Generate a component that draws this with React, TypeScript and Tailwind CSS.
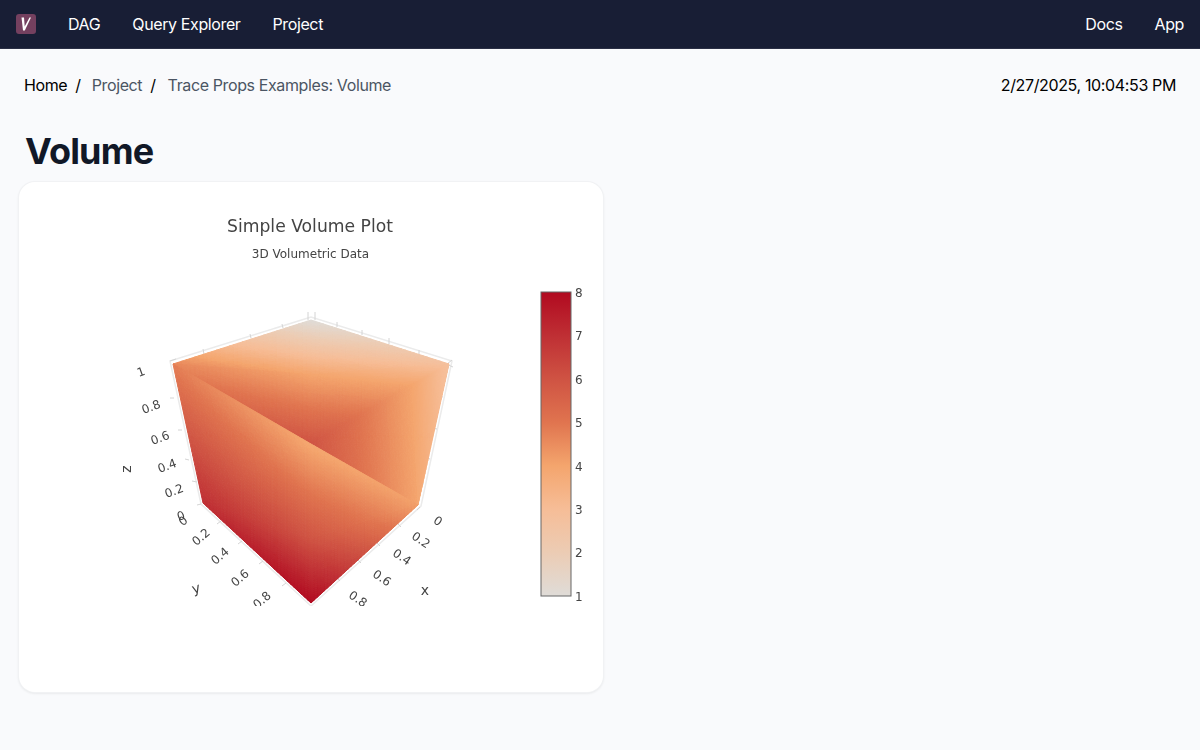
import React from "react";

type Pt = [number, number];
type Vert = { p: Pt; v: number };

// value -> colour, read off the colour bar
const SCALE: [number, number, number, number][] = [
  [1, 223, 220, 216],
  [2, 236, 204, 180],
  [3, 246, 189, 151],
  [4, 244, 165, 109],
  [5, 224, 116, 79],
  [6, 207, 83, 67],
  [7, 191, 47, 52],
  [8, 177, 10, 32],
];

function colorAt(v: number) {
  const c = Math.min(8, Math.max(1, v));
  const i = Math.min(6, Math.floor(c - 1));
  const t = c - 1 - i;
  const a = SCALE[i];
  const b = SCALE[i + 1];
  const mix = (k: number) => Math.round(a[k] + (b[k] - a[k]) * t);
  return `rgb(${mix(1)},${mix(2)},${mix(3)})`;
}

const A: Pt = [311, 320];
const L: Pt = [173, 364];
const R: Pt = [449, 364];
const C: Pt = [311, 444];
const M: Pt = [311, 375];
const N: Pt = [412, 385];
const D: Pt = [311, 540];
const BR: Pt = [418, 505];
const BL: Pt = [203, 503];
const B: Pt = [311, 603];

const FACES: Vert[][] = [
  [{ p: A, v: 1 }, { p: L, v: 4.6 }, { p: M, v: 4 }],
  [{ p: A, v: 1 }, { p: M, v: 4 }, { p: R, v: 2.8 }],
  [{ p: L, v: 4.6 }, { p: M, v: 4 }, { p: C, v: 6 }],
  [{ p: M, v: 4 }, { p: N, v: 4 }, { p: C, v: 6 }],
  [{ p: M, v: 4 }, { p: R, v: 2.8 }, { p: N, v: 4 }],
  [{ p: C, v: 6 }, { p: N, v: 4 }, { p: BR, v: 4 }],
  [{ p: N, v: 4 }, { p: R, v: 2.8 }, { p: BR, v: 3.9 }],
  [{ p: L, v: 4.8 }, { p: C, v: 3.9 }, { p: BL, v: 7 }],
  [{ p: C, v: 3.9 }, { p: BL, v: 7 }, { p: D, v: 6 }],
  [{ p: BL, v: 7 }, { p: D, v: 6 }, { p: B, v: 8 }],
  [{ p: C, v: 3.9 }, { p: BR, v: 4.1 }, { p: D, v: 6 }],
  [{ p: BR, v: 4.1 }, { p: D, v: 6 }, { p: B, v: 8 }],
];

function split(tri: Vert[], depth: number): Vert[][] {
  if (depth === 0) return [tri];
  const mid = (a: Vert, b: Vert): Vert => ({
    p: [(a.p[0] + b.p[0]) / 2, (a.p[1] + b.p[1]) / 2],
    v: (a.v + b.v) / 2,
  });
  const [a, b, c] = tri;
  const ab = mid(a, b);
  const bc = mid(b, c);
  const ca = mid(c, a);
  return [
    [a, ab, ca],
    [ab, b, bc],
    [ca, bc, c],
    [ab, bc, ca],
  ].flatMap((t) => split(t, depth - 1));
}

const CELLS = FACES.flatMap((f) => split(f, 5));

const Z_TICKS = [
  { t: "1", x: 141, y: 372 },
  { t: "0.8", x: 151, y: 407 },
  { t: "0.6", x: 160, y: 438 },
  { t: "0.4", x: 167, y: 466 },
  { t: "0.2", x: 174, y: 491 },
  { t: "0", x: 181, y: 516 },
];
const Y_TICKS = [
  { t: "0", x: 183, y: 521 },
  { t: "0.2", x: 201, y: 537 },
  { t: "0.4", x: 220, y: 556 },
  { t: "0.6", x: 240, y: 578 },
  { t: "0.8", x: 262, y: 600 },
];
const X_TICKS = [
  { t: "0", x: 438, y: 521 },
  { t: "0.2", x: 421, y: 540 },
  { t: "0.4", x: 402, y: 557 },
  { t: "0.6", x: 382, y: 578 },
  { t: "0.8", x: 358, y: 599 },
];

// short tick strokes along the cube edges
const TICK_MARKS = [
  "M170 361L176 359", "M203 349L204 354", "M250 334L251 338", "M282 324L283 328",
  "M337 322L337 327", "M362 330L362 335", "M389 338L389 344", "M419 350L419 355",
  "M452 360L447 364", "M446 364L453 367", "M443 397L439 396", "M437 429L432 428", "M430 459L426 458", "M424 484L419 483",
  "M170 398L174 398", "M182 430L178 430", "M189 460L185 459", "M197 482L192 481", "M201 504L197 505",
  "M221 521L217 524", "M242 541L238 544", "M263 561L259 564", "M286 583L282 586",
  "M420 507L417 510", "M401 527L398 524", "M380 546L377 543", "M361 563L358 560", "M340 581L337 578",
  "M308 320L308 312", "M315 320L315 312",
];

function Chart() {
  const COLORBAR = ["8", "7", "6", "5", "4", "3", "2", "1"];
  return (
    <svg
      viewBox="19 182 584 510"
      className="h-full w-full tracking-normal will-change-transform"
      style={{ fontFamily: "'DejaVu Sans', sans-serif" }}
    >
      <defs>
        <linearGradient id="bar" x1="0" y1="1" x2="0" y2="0">
          {SCALE.map((s) => (
            <stop key={s[0]} offset={(s[0] - 1) / 7} stopColor={colorAt(s[0])} />
          ))}
        </linearGradient>
        <clipPath id="scene">
          <rect x="60" y="280" width="470" height="326" />
        </clipPath>
      </defs>

      <text x="310" y="232" textAnchor="middle" fontSize="17.2" fill="#444">
        Simple Volume Plot
      </text>
      <text x="310.5" y="258" textAnchor="middle" fontSize="12" fill="#444">
        3D Volumetric Data
      </text>

      <g clipPath="url(#scene)">
        <path
          d="M170 361L311 317L452 361L421 506L311 606L201 504Z"
          fill="none"
          stroke="#ebebeb"
          strokeWidth="1.5"
        />
        <path d={TICK_MARKS.join("")} fill="none" stroke="#d4d4d4" strokeWidth="1" />
        {CELLS.map((c, i) => {
          const fill = colorAt((c[0].v + c[1].v + c[2].v) / 3);
          return (
            <polygon
              key={i}
              points={c.map((v) => v.p.join(",")).join(" ")}
              fill={fill}
              stroke={fill}
              strokeWidth="1"
            />
          );
        })}
        <g fontSize="12" fill="#444" textAnchor="middle" dominantBaseline="central">
          {Z_TICKS.map((t) => (
            <text key={"z" + t.t} transform={`translate(${t.x} ${t.y}) rotate(-20)`}>
              {t.t}
            </text>
          ))}
          {Y_TICKS.map((t) => (
            <text key={"y" + t.t} transform={`translate(${t.x} ${t.y}) rotate(-40)`}>
              {t.t}
            </text>
          ))}
          {X_TICKS.map((t) => (
            <text key={"x" + t.t} transform={`translate(${t.x} ${t.y}) rotate(34)`}>
              {t.t}
            </text>
          ))}
          <text fontSize="14" transform="translate(126 469) rotate(-90)">z</text>
          <text fontSize="14" transform="translate(196 588) rotate(-15)">y</text>
          <text fontSize="14" transform="translate(425 590)">x</text>
        </g>
      </g>

      <rect x="541" y="292" width="30" height="304" fill="url(#bar)" stroke="#666" strokeWidth="1" />
      <g fontSize="12" fill="#444" dominantBaseline="central">
        {COLORBAR.map((t, i) => (
          <text key={t} x="575" y={293 + i * 43.4}>
            {t}
          </text>
        ))}
      </g>
    </svg>
  );
}

export default function App() {
  return (
    <div className="h-[750px] overflow-hidden bg-[#f9fafc] font-['Inter',sans-serif] tracking-[-0.38px] text-black">
      <nav className="flex h-[49px] items-center justify-between border-b border-[#2a2f45] bg-[#181e35] pl-4 pr-4 text-white">
        <div className="flex items-center gap-8">
          <div className="flex h-5 w-5 items-center justify-center rounded-[3px] bg-[#74405f]">
            <svg viewBox="0 0 20 20" className="h-5 w-5">
              <path d="M5.5 3.5L8 3.5L8.7 12.5L13.5 3.5L15 3.5L8.8 16.5L7 16.5Z" fill="#fff" />
            </svg>
          </div>
          <a className="text-base">DAG</a>
          <a className="text-base">Query Explorer</a>
          <a className="text-base">Project</a>
        </div>
        <div className="flex items-center gap-8">
          <a className="text-base">Docs</a>
          <a className="text-base">App</a>
        </div>
      </nav>

      <div className="flex items-center justify-between px-6 pt-6">
        <div className="flex items-center text-base">
          <span>Home</span>
          <span className="ml-2 mr-[11px]">/</span>
          <span className="text-[#4b5563]">Project</span>
          <span className="ml-2 mr-3">/</span>
          <span className="text-[#4b5563]">Trace Props Examples: Volume</span>
        </div>
        <span className="text-base tracking-[-0.36px]">2/27/2025, 10:04:53 PM</span>
      </div>

      <h1 className="mt-[34px] pl-[25px] text-4xl font-bold tracking-[-0.8px] text-[#111827]">Volume</h1>

      <div className="ml-[19px] mt-[11px] h-[510px] w-[584px] overflow-hidden rounded-2xl bg-white shadow-[0_0_0_1px_#f1f2f4,0_1px_3px_rgba(0,0,0,0.12)]">
        <Chart />
      </div>
    </div>
  );
}
